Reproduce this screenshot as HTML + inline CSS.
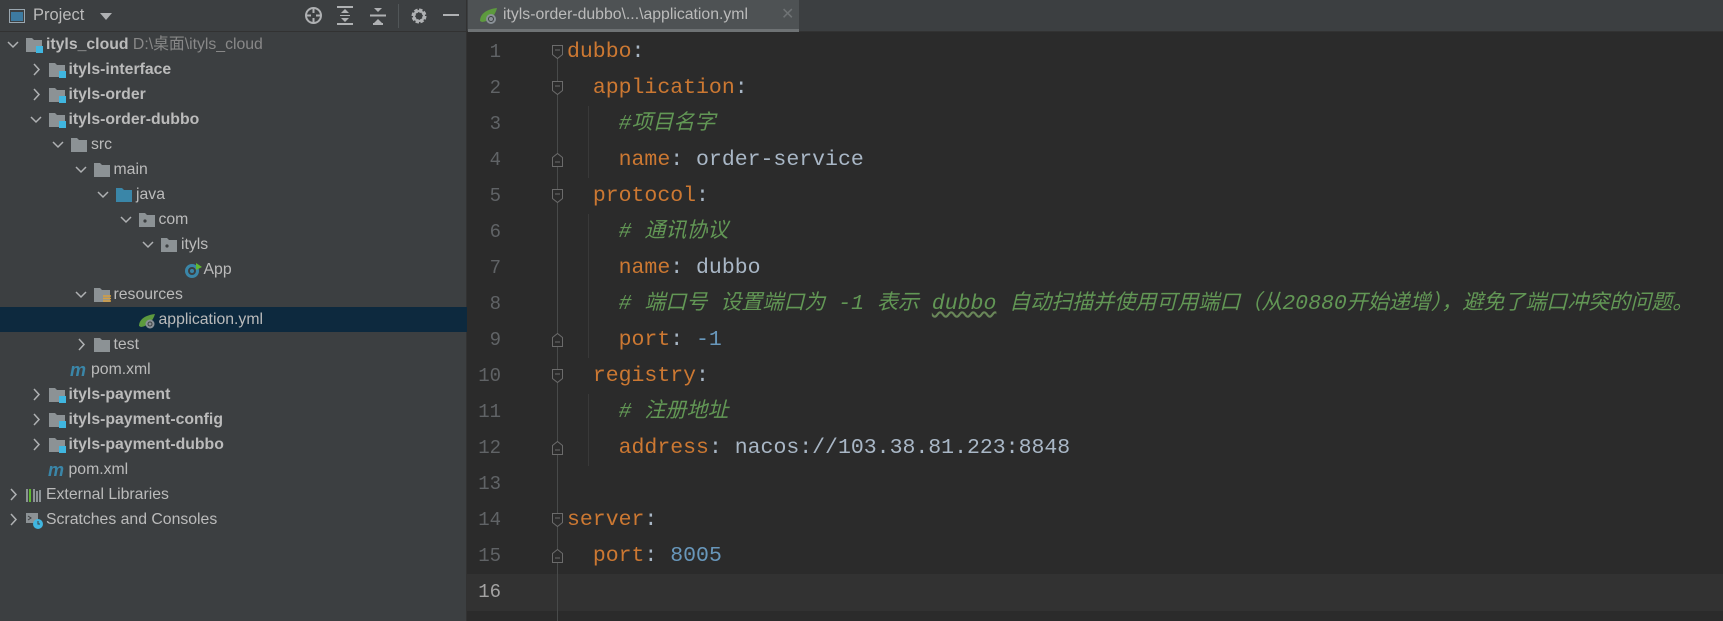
<!DOCTYPE html>
<html><head><meta charset="utf-8"><style>
*{margin:0;padding:0;box-sizing:border-box}
body{width:1723px;height:621px;overflow:hidden;background:#2b2b2b;font-family:"Liberation Sans","Noto Sans CJK SC",sans-serif;position:relative}
#side{position:absolute;left:0;top:0;width:467px;height:621px;background:#3c3f41;border-right:1px solid #323232}
#hdr{position:absolute;left:0;top:0;width:467px;height:32px;border-bottom:1px solid #323232}
.row{position:absolute;left:0;width:467px;height:25px;font-size:15.8px;color:#bbbbbb;line-height:25px;white-space:nowrap}
.row.sel{background:#0d293e}
.row b{color:#bbbbbb}
.row .t{position:absolute;top:0}
.row svg{position:absolute;top:4px}
.chev{position:absolute;top:0;width:12px;height:25px}
#tabbar{position:absolute;left:467px;top:0;right:0;height:32px;background:#3c3f41;border-bottom:1px solid #323232}
#tab{position:absolute;left:468px;top:0;width:331px;height:32px;background:#4e5254;border-bottom:3px solid #6e7274;color:#bbbbbb;font-size:15.8px;line-height:29px}
.ln{position:absolute;left:467px;width:34px;text-align:right;font-family:"Liberation Mono",monospace;font-size:19px;color:#606366;height:36px;line-height:36px}
.code{position:absolute;left:567px;height:36px;line-height:36px;font-family:"Liberation Mono","Noto Sans CJK SC",monospace;font-size:21.5px;color:#a9b7c6;white-space:pre}
.k{color:#cc7832}.c{color:#629755;font-style:italic}.n{color:#6897bb}
.z{font-size:21px;font-family:"Noto Sans CJK SC",sans-serif;line-height:1}
.fold{position:absolute;left:552px;width:11px;height:14px}
</style></head><body>
<div id="side">
 <div id="hdr">
  <svg style="position:absolute;left:9px;top:9px" width="16" height="14"><rect x="0.5" y="0.5" width="15" height="13" fill="none" stroke="#9aa7b0"/><rect x="2" y="3" width="12" height="9" fill="#3d7aa0"/></svg>
  <span style="position:absolute;left:33px;top:6px;font-size:16.5px;color:#bbbbbb">Project</span>
  <svg style="position:absolute;left:100px;top:13px" width="12" height="7"><path d="M0 0h12L6 7z" fill="#afb1b3"/></svg>
  <svg style="position:absolute;left:304px;top:6px" width="19" height="19"><circle cx="9.5" cy="9.5" r="7.5" fill="none" stroke="#afb1b3" stroke-width="2"/><path d="M9.5 2v5M9.5 12v5M2 9.5h5M12 9.5h5" stroke="#afb1b3" stroke-width="2"/></svg>
  <svg style="position:absolute;left:337px;top:6px" width="16" height="19"><path d="M0 1h16M0 18h16" stroke="#afb1b3" stroke-width="2"/><path d="M4 7l4-4 4 4zM4 12l4 4 4-4z" fill="#afb1b3"/><path d="M3 9.5h10" stroke="#afb1b3"/></svg>
  <svg style="position:absolute;left:370px;top:6px" width="16" height="19"><path d="M0 9.5h16" stroke="#afb1b3" stroke-width="2"/><path d="M4 2l4 4 4-4zM4 17l4-4 4 4z" fill="#afb1b3"/><path d="M3 18h10" stroke="#afb1b3" stroke-width="2"/></svg>
  <div style="position:absolute;left:398px;top:4px;width:1px;height:24px;background:#515658"></div>
  <svg style="position:absolute;left:410px;top:7px" width="18" height="18"><circle cx="9" cy="9" r="5.5" fill="none" stroke="#afb1b3" stroke-width="4" stroke-dasharray="3 1.3"/><circle cx="9" cy="9" r="5" fill="none" stroke="#afb1b3" stroke-width="2"/></svg>
  <div style="position:absolute;left:443px;top:14px;width:16px;height:2px;background:#afb1b3"></div>
 </div>
</div>
<div id="tabbar"></div>
<div id="tab"><svg style="position:absolute;left:10px;top:7px" width="22" height="18"><path d="M2 14C2 6 10 2 19 1 17 9 12 14 4 15z" fill="#5d9a3e"/><circle cx="13" cy="12" r="5" fill="#8a9197"/><circle cx="13" cy="12" r="2.5" fill="none" stroke="#3c3f41"/></svg><span style="position:absolute;left:35px;top:0">ityls-order-dubbo\...\application.yml</span><span style="position:absolute;left:313px;top:0;color:#6e7274;font-size:16px">✕</span></div>
<div style="position:absolute;left:467px;top:574px;width:1256px;height:37px;background:#323232"></div>
<div style="position:absolute;left:557px;top:50px;width:1px;height:571px;background:#484a4a"></div>
<div style="position:absolute;left:588px;top:106px;width:1px;height:72px;background:#393939"></div>
<div style="position:absolute;left:588px;top:214px;width:1px;height:144px;background:#393939"></div>
<div style="position:absolute;left:588px;top:394px;width:1px;height:72px;background:#393939"></div>
<div id="lines"></div>
<script>
var tree=[
[0,1,'mod','<b>ityls_cloud</b> <span style="color:#888">D:\\桌面\\ityls_cloud</span>'],
[1,2,'mod','<b>ityls-interface</b>'],[1,2,'mod','<b>ityls-order</b>'],[1,1,'mod','<b>ityls-order-dubbo</b>'],
[2,1,'f','src'],[3,1,'f','main'],[4,1,'fb','java'],[5,1,'pk','com'],[6,1,'pk','ityls'],[7,0,'app','App'],
[3,1,'res','resources'],[5,0,'yml','application.yml'],[3,2,'f','test'],[2,0,'m','pom.xml'],
[1,2,'mod','<b>ityls-payment</b>'],[1,2,'mod','<b>ityls-payment-config</b>'],[1,2,'mod','<b>ityls-payment-dubbo</b>'],[1,0,'m','pom.xml'],
[0,2,'lib','External Libraries'],[0,2,'scr','Scratches and Consoles']];
var icons={
mod:'<path d="M1 2h6l2 2h8v12H1z" fill="#8c9295"/><rect x="11" y="10" width="7" height="7" fill="#40b6e0"/>',
f:'<path d="M1 2h6l2 2h8v12H1z" fill="#8c9295"/>',
fb:'<path d="M1 2h6l2 2h8v12H1z" fill="#3a86a8"/>',
pk:'<path d="M1 2h6l2 2h8v12H1z" fill="#8c9295"/><circle cx="7" cy="10" r="1.6" fill="#3c3f41"/>',
res:'<path d="M1 2h6l2 2h8v12H1z" fill="#8c9295"/><path d="M10 10h8M10 12.5h8M10 15h8" stroke="#d8a03f" stroke-width="1.6"/>',
app:'<circle cx="9" cy="10" r="7" fill="#3a86a8"/><circle cx="9" cy="10" r="3" fill="none" stroke="#3c3f41" stroke-width="2"/><path d="M13 2l6 4-6 3z" fill="#5fb832"/>',
yml:'<path d="M1 15C1 8 8 4 17 3 15 10 10 15 3 16z" fill="#5d9a3e"/><circle cx="12" cy="13" r="4.5" fill="#8a9197"/><circle cx="12" cy="13" r="2" fill="none" stroke="#3c3f41"/>',
m:'<text x="0" y="15" font-family="Liberation Sans" font-weight="bold" font-style="italic" font-size="18" fill="#3a86a8">m</text>',
lib:'<path d="M2 3v13M5 3v13M9 3v13M12 5v11M15 4v12" stroke="#8c9295" stroke-width="2"/><path d="M5 3v13" stroke="#5fb832" stroke-width="2"/>',
scr:'<path d="M1 2h12v10H1z" fill="#8c9295"/><path d="M3 5l3 2-3 2" stroke="#3c3f41" fill="none"/><circle cx="13" cy="13" r="5" fill="#40b6e0"/><path d="M13 10v3h2" stroke="#3c3f41" fill="none"/>'};
var h='';
tree.forEach(function(r,i){var lv=r[0],top=32+i*25,ix=25+lv*22.5,cx=ix-18;
var ch='';if(r[1]==1)ch='<svg class="chev" style="left:'+cx+'px;top:8px;height:10px" width="12" height="10"><path d="M1 2l5 5 5-5" stroke="#afb1b3" fill="none" stroke-width="1.5"/></svg>';
if(r[1]==2)ch='<svg class="chev" style="left:'+(cx+2)+'px;top:6px;height:13px" width="10" height="13"><path d="M2 1l5 5.5-5 5.5" stroke="#afb1b3" fill="none" stroke-width="1.5"/></svg>';
h+='<div class="row'+(i==11?' sel':'')+'" style="top:'+top+'px">'+ch+'<svg style="left:'+ix+'px" width="20" height="18">'+icons[r[2]]+'</svg><span class="t" style="left:'+(ix+21)+'px">'+r[3]+'</span></div>';});
document.getElementById('side').insertAdjacentHTML('beforeend',h);
var z=function(s){return s.replace(/([\u3000-\u9fff\uff00-\uffef]+)/g,'<span class="z">$1</span>')};
var L=['<span class="k">dubbo</span>:','  <span class="k">application</span>:','    <span class="c">#'+z('项目名字')+'</span>','    <span class="k">name</span>: order-service',
'  <span class="k">protocol</span>:','    <span class="c"># '+z('通讯协议')+'</span>','    <span class="k">name</span>: dubbo',
'    <span class="c"># '+z('端口号')+' '+z('设置端口为')+' -1 '+z('表示')+' <span style="text-decoration:underline wavy #6a8759">dubbo</span> '+z('自动扫描并使用可用端口（从')+'20880'+z('开始递增），避免了端口冲突的问题。')+'</span>',
'    <span class="k">port</span>: <span class="n">-1</span>','  <span class="k">registry</span>:','    <span class="c"># '+z('注册地址')+'</span>','    <span class="k">address</span>: nacos://103.38.81.223:8848','',
'<span class="k">server</span>:','  <span class="k">port</span>: <span class="n">8005</span>',''];
var folds={1:'o',2:'o',4:'c',5:'o',9:'c',10:'o',12:'c',14:'o',15:'c'};
var g='';L.forEach(function(s,i){var t=34+i*36;
g+='<div class="ln" style="top:'+t+'px;'+(i==15?'color:#a4a3a3':'')+'">'+(i+1)+'</div><div class="code" style="top:'+t+'px">'+s+'</div>';
var f=folds[i+1];if(f){var d=f=='o'?'M0.5 0.5h10v9l-5 4-5-4z':'M0.5 13.5h10v-9l-5-4-5 4z';
g+='<svg class="fold" style="top:'+(t+11)+'px" width="11" height="14"><path d="'+d+'" fill="#2b2b2b" stroke="#6b6b6b"/><path d="M3 '+(f=='o'?5:9)+'h5" stroke="#6b6b6b"/></svg>';}});
document.getElementById('lines').innerHTML=g;
</script>
</body></html>
